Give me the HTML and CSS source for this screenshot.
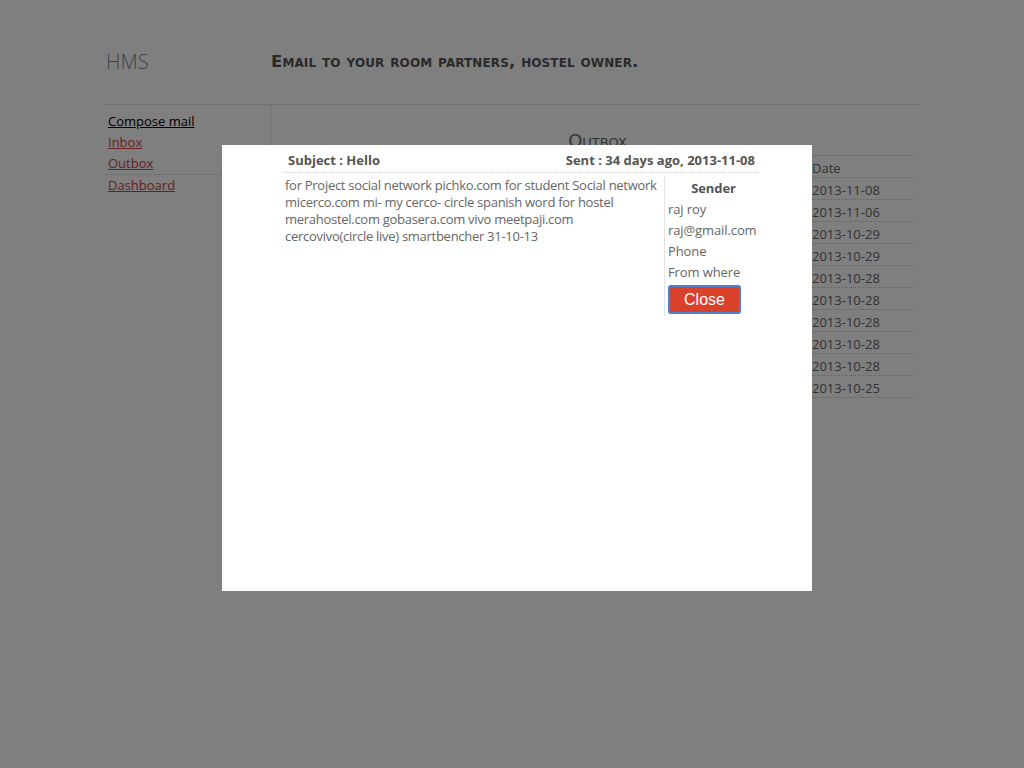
FILE: index.html
```html
<!DOCTYPE html>
<html>
<head>
<meta charset="utf-8">
<title>HMS - Outbox</title>
<link rel="stylesheet" href="styles.css">
</head>
<body>
<div class="page">
  <header class="header">
    <div class="logo">HMS</div>
    <div class="title">Email to your room partners, hostel owner.</div>
  </header>
  <div class="layout">
    <nav class="sidebar">
      <a class="nav-link current" href="#">Compose mail</a>
      <a class="nav-link" href="#">Inbox</a>
      <a class="nav-link sep" href="#">Outbox</a>
      <a class="nav-link" href="#">Dashboard</a>
    </nav>
    <main class="main">
      <h2 class="main-title">Outbox</h2>
      <table class="mail-table">
        <tr><th class="c-to">To</th><th class="c-subj">Subject</th><th class="c-date">Date</th></tr>
        <tr><td>raj roy</td><td>Hello</td><td>2013-11-08</td></tr>
        <tr><td>raj roy</td><td>Hi</td><td>2013-11-06</td></tr>
        <tr><td>raj roy</td><td>Test</td><td>2013-10-29</td></tr>
        <tr><td>raj roy</td><td>Test</td><td>2013-10-29</td></tr>
        <tr><td>raj roy</td><td>Room</td><td>2013-10-28</td></tr>
        <tr><td>raj roy</td><td>Room</td><td>2013-10-28</td></tr>
        <tr><td>raj roy</td><td>Room</td><td>2013-10-28</td></tr>
        <tr><td>raj roy</td><td>Room</td><td>2013-10-28</td></tr>
        <tr><td>raj roy</td><td>Room</td><td>2013-10-28</td></tr>
        <tr><td>raj roy</td><td>Hostel</td><td>2013-10-25</td></tr>
      </table>
    </main>
  </div>
</div>
<div class="overlay"></div>
<div class="modal">
  <div class="modal-inner">
    <div class="modal-head">
      <span class="subject">Subject : Hello</span>
      <span class="sent">Sent : 34 days ago, 2013-11-08</span>
    </div>
    <div class="modal-body">
      <div class="message">for Project social network pichko.com for student Social network micerco.com mi- my cerco- circle spanish word for hostel merahostel.com gobasera.com vivo meetpaji.com cercovivo(circle live) smartbencher 31-10-13</div>
      <div class="sender">
        <div class="sender-title">Sender</div>
        <div class="sender-row">raj roy</div>
        <div class="sender-row">raj@gmail.com</div>
        <div class="sender-row">Phone</div>
        <div class="sender-row">From where</div>
        <button class="close-btn">Close</button>
      </div>
    </div>
  </div>
</div>
</body>
</html>
```

FILE: styles.css
```css
* { box-sizing: border-box; }
html, body { margin: 0; padding: 0; }
body {
  background: #fff;
  font-family: "Open Sans", "Noto Sans", sans-serif;
  font-size: 13px;
  color: #666;
}
.page {
  width: 814px;
  margin: 0 auto;
}
.header {
  display: flex;
  align-items: flex-start;
  height: 105px;
  padding-top: 49px;
  border-bottom: 1px dotted #c8c8c8;
}
.logo {
  width: 166px;
  padding-left: 1px;
  font-family: "Open Sans", sans-serif;
  font-weight: 300;
  font-size: 20px;
  line-height: 26px;
  color: #7d8494;
}
.title {
  font-family: "DejaVu Sans", sans-serif;
  font-variant: small-caps;
  font-weight: bold;
  font-size: 16.6px;
  line-height: 26px;
  color: #555;
  letter-spacing: 0.1px;
}
.layout {
  display: flex;
  align-items: flex-start;
}
.sidebar {
  width: 166px;
  min-height: 320px;
  padding-top: 6px;
  border-right: 1px dotted #c8c8c8;
  display: flex;
  flex-direction: column;
}
.nav-link {
  display: block;
  padding: 2px 3px;
  line-height: 17px;
  color: #cc4444;
  text-decoration: underline;
}
.nav-link.current { color: #000; }
.nav-link.sep {
  border-bottom: 1px dotted #c8c8c8;
}
.main {
  flex: 1;
  padding: 22px 5px 0 10px;
}
.main-title {
  margin: 0;
  text-align: center;
  font-family: "DejaVu Sans", sans-serif;
  font-variant: small-caps;
  font-weight: normal;
  font-size: 18px;
  line-height: 28px;
  color: #666;
}
.mail-table {
  width: 100%;
  border-collapse: collapse;
  border-top: 1px dotted #c8c8c8;
}
.mail-table th, .mail-table td {
  text-align: left;
  font-weight: normal;
  padding: 3px 0 0 0;
  height: 22px;
  line-height: 18px;
  border-bottom: 1px dotted #c8c8c8;
  color: #666;
}
.c-to { width: 150px; }
.c-date { width: 102px; }
.overlay {
  position: fixed;
  inset: 0;
  background: rgba(0, 0, 0, 0.5);
}
.modal {
  position: fixed;
  left: 222px;
  top: 145px;
  width: 590px;
  height: 446px;
  background: #fff;
  padding: 5px 53px 0 62px;
}
.modal-head {
  display: flex;
  justify-content: space-between;
  padding: 0 4px;
  height: 23px;
  line-height: 20px;
  font-weight: bold;
  color: #555;
  border-bottom: 1px dotted #ccc;
}
.modal-body {
  display: flex;
  align-items: flex-start;
  padding-top: 4px;
}
.message {
  flex: 1;
  padding: 0 0 0 1px;
  line-height: 17px;
  letter-spacing: -0.28px;
  color: #666;
}
.sender {
  width: 95px;
  border-left: 1px solid #e4e4e4;
  padding: 3px 0 2px 3px;
  letter-spacing: -0.1px;
}
.sender-title {
  text-align: center;
  font-weight: bold;
  color: #555;
  line-height: 16px;
  margin-bottom: 3px;
}
.sender-row {
  line-height: 21px;
  color: #666;
  white-space: nowrap;
}
.close-btn {
  display: block;
  margin-top: 2px;
  width: 73px;
  height: 29px;
  background: #d9412b;
  border: 2px solid #4a7fd4;
  border-radius: 3px;
  color: #fff;
  font-family: "Liberation Sans", Arial, sans-serif;
  font-size: 16px;
  padding: 0;
  letter-spacing: 0;
}
```
